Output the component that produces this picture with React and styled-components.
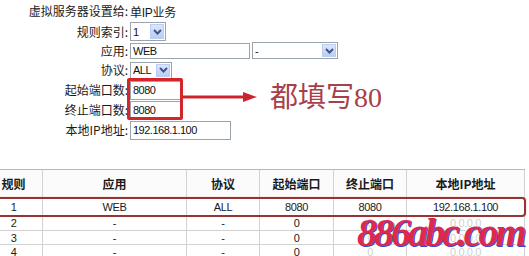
import React from "react";
import styled, { createGlobalStyle } from "styled-components";

const GlobalStyle = createGlobalStyle`
  body {
    margin: 0;
    background: #fff;
    font-family: "Liberation Sans", "Noto Sans CJK SC", sans-serif;
    color: #111;
  }
`;

const Page = styled.div`
  position: relative;
  width: 529px;
  height: 256px;
  overflow: hidden;
`;

const Form = styled.div`
  display: grid;
  grid-template-columns: 130px 1fr;
  grid-template-rows: 22px 19px 19px 20px 20px 20px 20px;
  align-items: center;
`;

const Label = styled.div`
  font-family: "Noto Sans CJK SC", sans-serif;
  font-size: 12px;
  line-height: 14px;
  text-align: right;
  padding-right: 2px;
  color: #1a1a1a;
`;

const Value = styled.div`
  display: flex;
  align-items: center;
  gap: 2px;
  font-family: "Liberation Sans", "Noto Sans CJK SC", sans-serif;
  font-size: 12px;
  letter-spacing: -0.3px;
  color: #1a1a1a;
`;

const Box = styled.div`
  box-sizing: border-box;
  width: ${({ w }) => w}px;
  height: ${({ h }) => h || 18}px;
  border: 1px solid #9aa4ad;
  background: #fff;
  display: flex;
  align-items: center;
  justify-content: space-between;
  padding: 0 1px 0 2px;
  font-size: 11px;
  letter-spacing: -0.5px;
  color: #111;
`;

const DropBtn = styled.span`
  box-sizing: border-box;
  width: 14px;
  height: ${({ h }) => h || 14}px;
  background: linear-gradient(#dbe6fc, #b9cdf6);
  border: 1px solid #bccdf0;
  display: flex;
  align-items: center;
  justify-content: center;
`;

const Chevron = () => (
  <svg width="9" height="6" viewBox="0 0 9 6">
    <path d="M1 1 L4.5 4.5 L8 1" fill="none" stroke="#3f5685" strokeWidth="2" />
  </svg>
);

const Select = ({ w, h, children }) => (
  <Box w={w} h={h}>
    <span>{children}</span>
    <DropBtn h={h ? h - 4 : 14}>
      <Chevron />
    </DropBtn>
  </Box>
);

const RedFrame = styled.div`
  position: absolute;
  left: 127px;
  top: 78px;
  width: 56px;
  height: 42px;
  box-sizing: border-box;
  border: 3px solid #d3262c;
  border-radius: 2px;
`;

const Arrow = styled.svg`
  position: absolute;
  left: 183px;
  top: 91px;
`;

const Callout = styled.div`
  position: absolute;
  left: 270px;
  top: 82px;
  font-family: "Liberation Serif", "Noto Sans CJK SC", serif;
  font-size: 28px;
  line-height: 32px;
  color: #a7404a;
`;

const Table = styled.div`
  margin-top: 29px;
  margin-left: -15px;
  width: 540px;
  border-top: 1px solid #b9b9b9;
`;

const Row = styled.div`
  display: grid;
  grid-template-columns: 58px 144px 73px 74px 73px 118px;
  height: ${({ h }) => h}px;
  box-sizing: border-box;
  border-bottom: 1px solid #d2d2d2;
  background: ${({ head }) => (head ? "#fbfbfb" : "#fff")};
  ${({ marked }) =>
    marked &&
    `
    outline: 2px solid #973333;
    outline-offset: -1px;
    border-radius: 3px;
    box-shadow: 0 0 2px 1px rgba(200, 90, 90, 0.35);
  `}
`;

const Cell = styled.div`
  display: flex;
  align-items: center;
  justify-content: center;
  border-right: 1px solid #d2d2d2;
  font-family: ${({ head }) =>
    head ? '"Noto Sans CJK SC", sans-serif' : '"Liberation Sans", sans-serif'};
  font-size: ${({ head }) => (head ? 12 : 11)}px;
  font-weight: ${({ head }) => (head ? 700 : 400)};
  letter-spacing: ${({ head }) => (head ? 0 : -0.4)}px;
  color: ${({ faded }) => (faded ? "#d0d0d0" : "#1a1a1a")};
`;

const Watermark = styled.div`
  position: absolute;
  left: 357px;
  top: 210px;
  font-family: "Liberation Serif", serif;
  font-style: italic;
  font-weight: 700;
  font-size: 40px;
  line-height: 46px;
  letter-spacing: -3px;
  color: #dc2a4c;
  text-shadow: 1px 1px 0 #3c48c8, -1px 0 0 rgba(255, 255, 255, 0.8);
`;

const heads = ["规则", "应用", "协议", "起始端口", "终止端口", "本地IP地址"];

const rows = [
  { h: 18, marked: true, cells: ["1", "WEB", "ALL", "8080", "8080", "192.168.1.100"] },
  { h: 15, cells: ["2", "-", "-", "0", "0", "0.0.0.0"] },
  { h: 14, cells: ["3", "-", "-", "0", "0", "0.0.0.0"] },
  { h: 14, cells: ["4", "-", "-", "0", "0", "0.0.0.0"] },
];

export default function App() {
  return (
    <Page>
      <GlobalStyle />
      <Form>
        <Label>虚拟服务器设置给:</Label>
        <Value>单IP业务</Value>

        <Label>规则索引:</Label>
        <Value>
          <Select w={36} h={19}>1</Select>
        </Value>

        <Label>应用:</Label>
        <Value>
          <Box w={120} h={16}>WEB</Box>
          <Select w={86} h={17}>-</Select>
        </Value>

        <Label>协议:</Label>
        <Value>
          <Select w={42} h={17}>ALL</Select>
        </Value>

        <Label>起始端口数:</Label>
        <Value>
          <Box w={51} h={19}>8080</Box>
        </Value>

        <Label>终止端口数:</Label>
        <Value>
          <Box w={51} h={19}>8080</Box>
        </Value>

        <Label>本地IP地址:</Label>
        <Value>
          <Box w={101} h={19}>192.168.1.100</Box>
        </Value>
      </Form>

      <RedFrame />
      <Arrow width="74" height="12" viewBox="0 0 74 12">
        <line x1="0" y1="6" x2="62" y2="6" stroke="#c9262c" strokeWidth="3" />
        <polygon points="60,1 74,6 60,11" fill="#c9262c" />
      </Arrow>
      <Callout>都填写80</Callout>

      <Table>
        <Row h={28} head>
          {heads.map((t) => (
            <Cell key={t} head>
              {t}
            </Cell>
          ))}
        </Row>
        {rows.map((r, i) => (
          <Row key={i} h={r.h} marked={r.marked}>
            {r.cells.map((c, j) => (
              <Cell key={j} faded={!r.marked && j >= 4}>
                {c}
              </Cell>
            ))}
          </Row>
        ))}
      </Table>

      <Watermark>886abc.com</Watermark>
    </Page>
  );
}
